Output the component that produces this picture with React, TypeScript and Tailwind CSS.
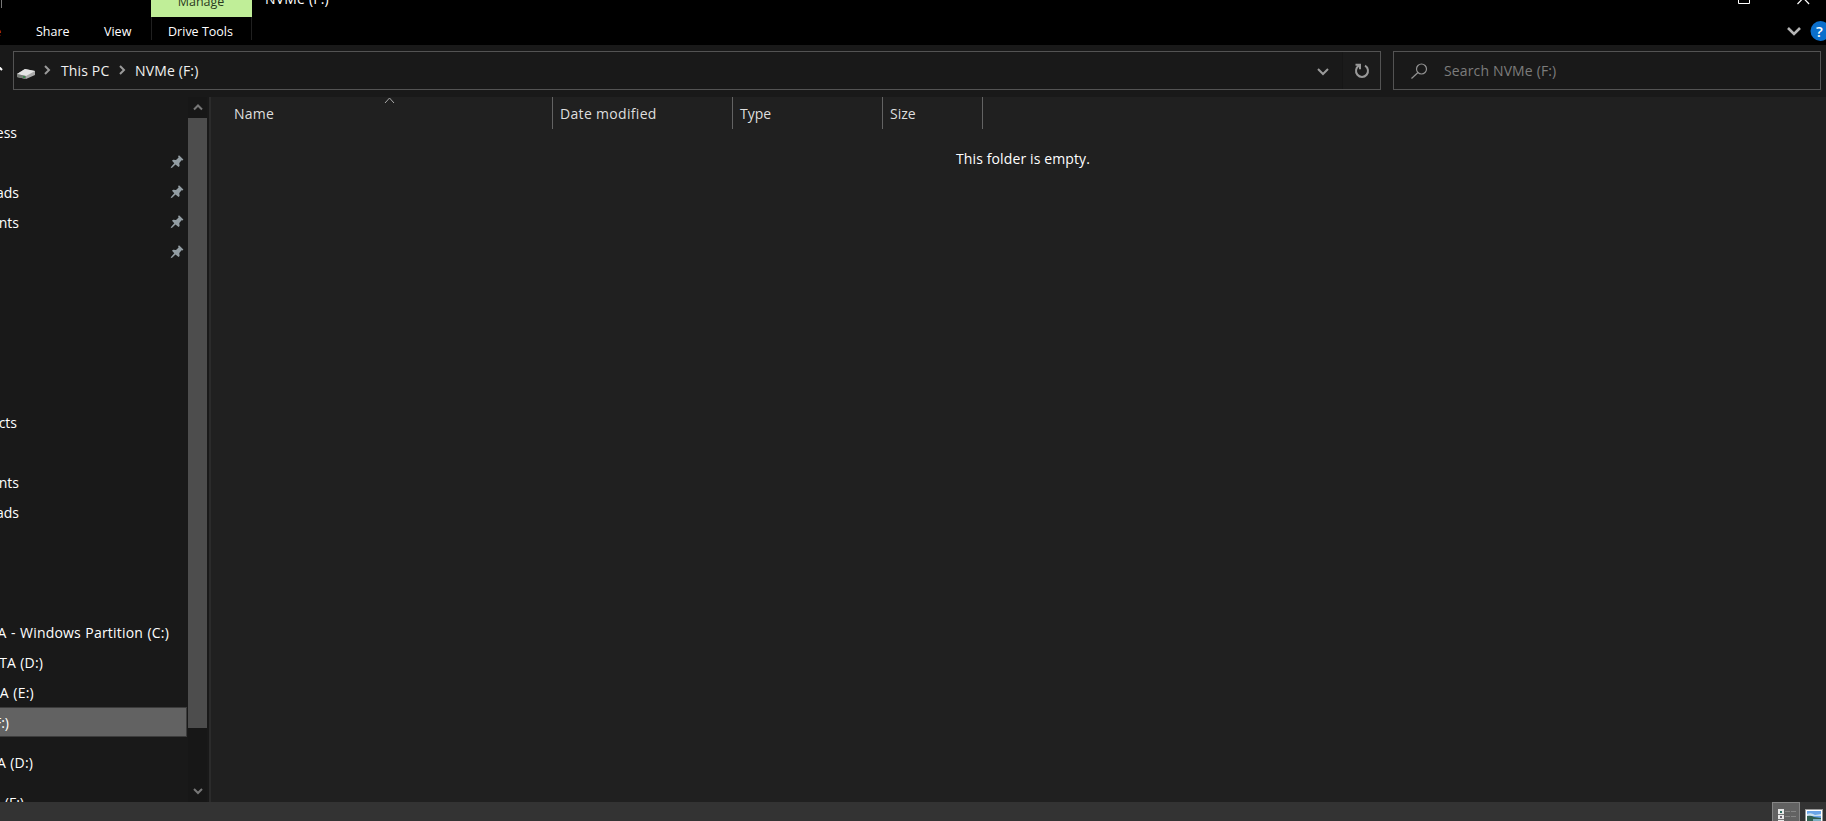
import React from "react";

type NavItem = {
  label?: string;
  row?: string;
  width?: string;
  pinned?: boolean;
  selected?: boolean;
};

const nav: NavItem[] = [
  { label: "ess", width: "w-[17px]" },
  { pinned: true },
  { label: "ads", width: "w-[19px]", pinned: true },
  { label: "nts", width: "w-[19px]", pinned: true },
  { pinned: true },
  {},
  {},
  {},
  { row: "h-[20px]" },
  {},
  { label: "cts", width: "w-[17px]" },
  {},
  { label: "nts", width: "w-[19px]" },
  { label: "ads", width: "w-[19px]" },
  {},
  {},
  {},
  { label: "A - Windows Partition (C:)", width: "w-[169px] tracking-[0.2px] [word-spacing:0.5px]" },
  { label: "TA (D:)", width: "w-[43px] tracking-[0.15px] [word-spacing:0.5px]" },
  { label: "A (E:)", width: "w-[34px] tracking-[0.25px] [word-spacing:0.5px]" },
  { label: "F:)", width: "w-[9px]", selected: true },
  { label: "A (D:)", width: "w-[33px] tracking-[0.15px] [word-spacing:0.5px]", row: "h-[50px]" },
  { label: "(F:)", width: "w-[24px]" },
];

function Pin() {
  return (
    <svg className="absolute top-2 left-[170px] h-[14px] w-[14px]" viewBox="0 0 14 14" fill="#939da3">
      <path d="M9 .3 13.400 4.600l-.9.8-.9-.1-2.300 2.700.3 2.900-1 1.100L5.500 9.600 2.400 12.500.600 13.300 1.200 11.700 4.300 8.300 2 5.700l1.100-1 2.900.3L8.600 2.600 8.100 1.300z" />
    </svg>
  );
}

function Chevron({ className, d, stroke = "#9a9a9a", w = 2 }: { className: string; d: string; stroke?: string; w?: number }) {
  return (
    <svg className={className} fill="none" stroke={stroke} strokeWidth={w}>
      <path d={d} />
    </svg>
  );
}

function TitleBar() {
  return (
    <header className="relative flex h-[45px] shrink-0 bg-black text-[12.5px] text-white">
      <div className="h-2 w-0.5 shrink-0 border-r border-[#777]" />
      <div className="relative flex w-[149px] shrink-0 pt-[22px] leading-5">
        <span className="absolute -left-[8px] text-[#e06b35]">e</span>
        <span className="ml-[34px] w-[68px]">Share</span>
        <span>View</span>
      </div>
      <div className="w-[101px] shrink-0">
        <div className="flex h-[17px] justify-center overflow-hidden bg-[#c0ee98]">
          <span className="-mt-[8px] -ml-px h-5 leading-5 text-[#2b3a20]">Manage</span>
        </div>
        <div className="flex h-[23px] justify-center border-x border-[#202020] pt-[5px] leading-5">
          <span className="-ml-[2px] whitespace-nowrap">Drive Tools</span>
        </div>
      </div>
      <div className="h-6 overflow-hidden pl-[13px]">
        <div className="-mt-[11px] text-sm leading-5 tracking-[0.2px]">NVMe (F:)</div>
      </div>
      <svg className="absolute top-0 right-0 h-[45px] w-[100px]" fill="none" stroke="#fff">
        <path d="M12.500 0v3.500h11V0" />
        <path d="M71.500 4 77.300-2 83.100 4" strokeWidth="1.200" />
        <path d="m62 28 6 6 6-6" stroke="#b5b5b5" strokeWidth="2.600" />
        <circle cx="94.500" cy="31" r="10" fill="#0b6fcc" stroke="none" />
      </svg>
      <span className="absolute top-[21px] left-[1816px] text-[15px] leading-5 font-semibold">?</span>
    </header>
  );
}

function AddressBar() {
  return (
    <div className="flex h-[52px] shrink-0 bg-[#191919] pt-[6px] text-sm tracking-[0.14px]">
      <div className="w-[13px] shrink-0">
        <svg className="mt-[14px] h-3 w-3" fill="none" stroke="#fff" strokeWidth="2">
          <path d="m-3 0 5 5" />
        </svg>
      </div>
      <div className="flex h-[39px] w-[1368px] shrink-0 items-center border border-[#535353] text-[#f0f0f0]">
        <svg className="mt-[6px] ml-[3px] h-[11px] w-[18px] shrink-0" viewBox="0 0 18 11">
          <path d="M0 6 8 1l10 2v4l-9 4-9-2z" fill="#a9a9a9" />
          <path d="M0 6 8 1l10 2-9 5z" fill="#e4e4e4" />
          <path d="m0 6 9 2v3L0 9z" fill="#777b77" />
          <path d="M6 8h2v2H6z" fill="#3c8a4d" />
        </svg>
        <Chevron className="mb-px ml-[9px] h-[12px] w-2 shrink-0" d="m1 2 4 4-4 4" />
        <span className="ml-[9px] w-[59px] whitespace-nowrap">This PC</span>
        <Chevron className="mb-px -ml-px h-[12px] w-2 shrink-0" d="m1 2 4 4-4 4" />
        <span className="ml-[8px] grow whitespace-nowrap">NVMe (F:)</span>
        <Chevron className="mt-[3px] mr-[13px] h-2 w-3 shrink-0" d="m1 1 5 5 5-5" />
        <div className="flex h-full w-[38px] shrink-0 items-center justify-center border-l border-[#161616] bg-[#1b1b1b]">
          <svg className="h-4 w-4" fill="none" stroke="#999" strokeWidth="2">
            <path d="M11 2.700A6 6 0 1 1 5 2.700M1.500 1.800H6v4.500" />
          </svg>
        </div>
      </div>
      <div className="ml-3 flex h-[39px] w-[428px] shrink-0 items-center border border-[#535353] pl-[17px] text-[#7c7c7c]">
        <svg className="h-4 w-[17px]" fill="none" stroke="#929292" strokeWidth="1.200">
          <circle cx="10.500" cy="6" r="5" />
          <path d="M7 9.500.500 15.500" />
        </svg>
        <span className="ml-4">Search NVMe (F:)</span>
      </div>
    </div>
  );
}

function Sidebar() {
  return (
    <aside className="flex w-[211px] shrink-0 bg-[#191919]">
      <nav className="flex w-[188px] shrink-0 flex-col overflow-hidden pt-[20px] text-sm text-white">
        {nav.map((n, i) => (
          <div
            key={i}
            className={`relative flex shrink-0 items-center ${n.row ?? "h-[30px]"} ${n.selected ? "w-[187px] border border-l-0 border-[#3c3c3c] bg-[#626262]" : ""}`}
          >
            {n.label && <span className={`flex justify-end pt-[2px] whitespace-nowrap ${n.width}`}>{n.label}</span>}
            {n.pinned && <Pin />}
          </div>
        ))}
      </nav>
      <div className="flex w-[19px] flex-col items-center bg-[#171717]">
        <Chevron className="mt-[6px] h-2 w-[10px]" d="m1 6.500 4-4 4 4" stroke="#777" />
        <div className="mt-[7px] h-[610px] w-[19px] bg-[#4d4d4d]" />
        <Chevron className="mt-[59px] h-2 w-[10px]" d="m1 2 4 4 4-4" stroke="#777" />
      </div>
      <div className="ml-[2px] w-[2px] bg-[#2b2b2b]" />
    </aside>
  );
}

function FileList() {
  return (
    <main className="flex grow flex-col bg-[#202020] text-sm">
      <div className="flex h-8 text-[#dedede]">
        <div className="relative w-[342px] border-r border-[#636363] pt-[7px] pl-[23px] tracking-[0.2px]">
          Name
          <Chevron className="absolute top-0 left-[173px] h-[7px] w-[11px]" d="M1 6 5.500 1 10 6" stroke="#aaa" w={1} />
        </div>
        <div className="w-[180px] border-r border-[#636363] pt-[7px] pl-[7px] tracking-[0.32px]">Date modified</div>
        <div className="w-[150px] border-r border-[#636363] pt-[7px] pl-[7px]">Type</div>
        <div className="w-[100px] border-r border-[#636363] pt-[7px] pl-[7px]">Size</div>
      </div>
      <p className="mt-[20px] ml-[745px] tracking-[0.12px] text-white">This folder is empty.</p>
    </main>
  );
}

function StatusBar() {
  return (
    <footer className="flex h-[19px] shrink-0 justify-end bg-[#333]">
      <div className="mr-[5px] h-5 w-7 border border-[#858585] bg-[#626262]">
        <svg className="h-[18px] w-[26px]">
          <path d="M5 6h6v12H5z" fill="#e8e8e8" />
          <path d="M7 8h2v2H7z" fill="#2d6b62" />
          <path d="M7 13h2v2H7z" fill="#6c6470" />
          <path d="M5 11.500h6M5 16.500h6" stroke="#777" />
          <path d="M12 8.500h5m1 0h5M12 13.500h5m1 0h5" stroke="#858585" />
        </svg>
      </div>
      <svg className="mr-[3px] h-[19px] w-[18px]">
        <path d="M0 7h18v13H0z" fill="#999" />
        <path d="M1 8h16v12H1z" fill="#fff" />
        <path d="M2 9h14v10H2z" fill="#6aa5e8" />
        <path d="M2 12q4-2 8 1l6-1v2H2z" fill="#c9e0f0" />
        <path d="M2 14q4-1 7 1l7 1v3H2z" fill="#315f50" />
        <path d="M8 17h8v2H8z" fill="#7fb0c4" />
      </svg>
    </footer>
  );
}

export default function App() {
  return (
    <div className="flex h-[821px] w-[1826px] flex-col overflow-hidden bg-[#202020] font-['Open_Sans','Noto_Sans',sans-serif]">
      <TitleBar />
      <AddressBar />
      <div className="flex h-[705px] shrink-0 overflow-hidden">
        <Sidebar />
        <FileList />
      </div>
      <StatusBar />
    </div>
  );
}
